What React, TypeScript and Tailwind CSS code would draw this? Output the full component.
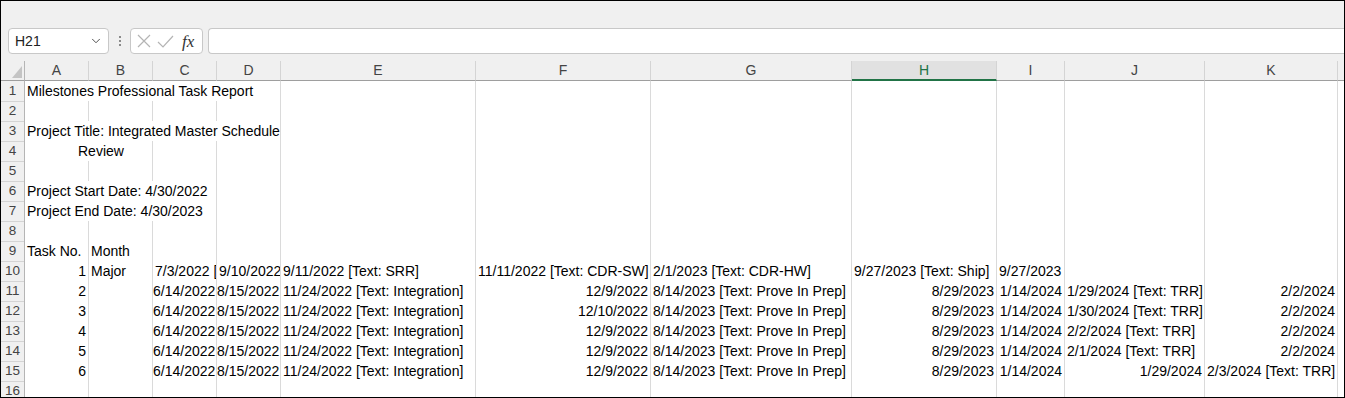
import { ChevronDown } from 'lucide-react';

type Cell = { t?: string; r?: boolean; span?: number; indent?: boolean };

const R = (t: string): Cell => ({ t, r: true });
const L = (t: string): Cell => ({ t });
const E: Cell = {};

const COLS = 'grid grid-cols-[24px_64px_64px_64px_64px_195px_175px_201px_145px_68px_140px_133px_1fr]';
const LETTERS = ['A', 'B', 'C', 'D', 'E', 'F', 'G', 'H', 'I', 'J', 'K'];
const SPAN: Record<number, string> = { 1: '', 2: 'col-span-2', 3: 'col-span-3', 4: 'col-span-4' };

const taskRow = (n: string, f: string, j: Cell): Cell[] => [
  R(n), E, R('6/14/2022'), R('8/15/2022'), L('11/24/2022 [Text: Integration]'), R(f),
  L('8/14/2023 [Text: Prove In Prep]'), R('8/29/2023'), R('1/14/2024'), j, R('2/2/2024'),
];

const ROWS: Cell[][] = [
  [{ t: 'Milestones Professional Task Report', span: 4 }],
  [],
  [{ t: 'Project Title: Integrated Master Schedule', span: 4 }],
  [{ t: 'Review', span: 2, indent: true }],
  [],
  [{ t: 'Project Start Date: 4/30/2022', span: 3 }],
  [{ t: 'Project End Date: 4/30/2023', span: 3 }],
  [],
  [L('Task No.'), L('Month')],
  [
    R('1'), L('Major'), L('7/3/2022 ['), L('9/10/2022'), L('9/11/2022 [Text: SRR]'),
    L('11/11/2022 [Text: CDR-SW]'), L('2/1/2023 [Text: CDR-HW]'), L('9/27/2023 [Text: Ship]'), L('9/27/2023'),
  ],
  taskRow('2', '12/9/2022', L('1/29/2024 [Text: TRR]')),
  taskRow('3', '12/10/2022', L('1/30/2024 [Text: TRR]')),
  taskRow('4', '12/9/2022', L('2/2/2024 [Text: TRR]')),
  taskRow('5', '12/9/2022', L('2/1/2024 [Text: TRR]')),
  [
    R('6'), E, R('6/14/2022'), R('8/15/2022'), L('11/24/2022 [Text: Integration]'), R('12/9/2022'),
    L('8/14/2023 [Text: Prove In Prep]'), R('8/29/2023'), R('1/14/2024'), R('1/29/2024'), L('2/3/2024 [Text: TRR]'),
  ],
  [],
];

function fill(cells: Cell[]): Cell[] {
  const out = [...cells];
  let used = out.reduce((s, c) => s + (c.span ?? 1), 0);
  while (used < 11) {
    out.push(E);
    used++;
  }
  return out;
}

function Toolbar() {
  return (
    <div className="h-[60px] flex items-start pt-[27px] pl-[7px] shrink-0">
      <div className="w-[101px] h-[26px] rounded-[4px] border border-[#c8c8c8] bg-white flex items-center justify-between pl-[6px] pr-[5px]">
        <span className="text-[14px] text-[#222]">H21</span>
        <ChevronDown size={14} strokeWidth={1.6} className="text-[#444]" />
      </div>
      <div className="w-[21px] h-[26px] flex flex-col items-center justify-center gap-[2px]">
        <span className="w-[2px] h-[2px] bg-[#8a8a8a]" />
        <span className="w-[2px] h-[2px] bg-[#8a8a8a]" />
        <span className="w-[2px] h-[2px] bg-[#8a8a8a]" />
      </div>
      <div className="w-[73px] h-[26px] rounded-[4px] border border-[#c8c8c8] bg-white flex items-center pl-[5px]">
        <svg width="14" height="14" viewBox="0 0 14 14" className="ml-[1px]">
          <path d="M1 1 L13 13 M13 1 L1 13" stroke="#b4b4b4" strokeWidth="1.2" fill="none" />
        </svg>
        <svg width="17" height="13" viewBox="0 0 17 13" className="ml-[6px]">
          <path d="M1 7 L6 12 L16 1" stroke="#b4b4b4" strokeWidth="1.2" fill="none" />
        </svg>
        <span className="ml-[8px] font-['Liberation_Serif'] italic text-[17px] leading-none text-[#333]">fx</span>
      </div>
      <div className="ml-[5px] flex-1 h-[26px] rounded-l-[4px] border border-r-0 border-[#c8c8c8] bg-white" />
    </div>
  );
}

function HeaderRow() {
  return (
    <div className={`${COLS} h-5 shrink-0`}>
      <div className="relative border-r border-b border-[#b5b5b5] border-b-[#9e9e9e]">
        <svg width="10" height="12" viewBox="0 0 10 12" className="absolute right-[2px] bottom-[2px]">
          <path d="M10 0 L10 12 L0 12 Z" fill="#c4c4c4" />
        </svg>
      </div>
      {LETTERS.map((l) =>
        l === 'H' ? (
          <div
            key={l}
            className="bg-[#e1e1e1] border-r border-[#d4d4d4] border-b-2 border-b-[#217346] text-center text-[14px] leading-[18px] text-[#217346]"
          >
            {l}
          </div>
        ) : (
          <div
            key={l}
            className="border-r border-[#d4d4d4] border-b border-b-[#9e9e9e] text-center text-[14px] leading-[19px] text-[#444]"
          >
            {l}
          </div>
        ),
      )}
      <div className="border-b border-[#9e9e9e]" />
    </div>
  );
}

function Row({ n, cells }: { n: number; cells: Cell[] }) {
  return (
    <div className={`${COLS} h-5 shrink-0`}>
      <div className="border-r border-b border-[#d4d4d4] border-r-[#b5b5b5] text-center text-[13.5px] leading-[20px] text-[#444]">
        {n}
      </div>
      {fill(cells).map((c, i) => (
        <div
          key={i}
          className={`${SPAN[c.span ?? 1]} bg-white border-r border-b border-[#dadada] overflow-hidden whitespace-nowrap text-[14px] leading-[21px] text-black ${
            c.r ? 'text-right pr-[2px]' : c.indent ? 'pl-[53px]' : 'pl-[2px]'
          }`}
        >
          {c.t}
        </div>
      ))}
      <div className="bg-white border-b border-[#dadada]" />
    </div>
  );
}

export default function App() {
  return (
    <div className="w-[1345px] h-[398px] border border-black bg-[#f0f0f0] overflow-hidden flex flex-col font-['Liberation_Sans',sans-serif]">
      <Toolbar />
      <HeaderRow />
      <div className="flex-1 overflow-hidden flex flex-col">
        {ROWS.map((cells, i) => (
          <Row key={i} n={i + 1} cells={cells} />
        ))}
      </div>
    </div>
  );
}
